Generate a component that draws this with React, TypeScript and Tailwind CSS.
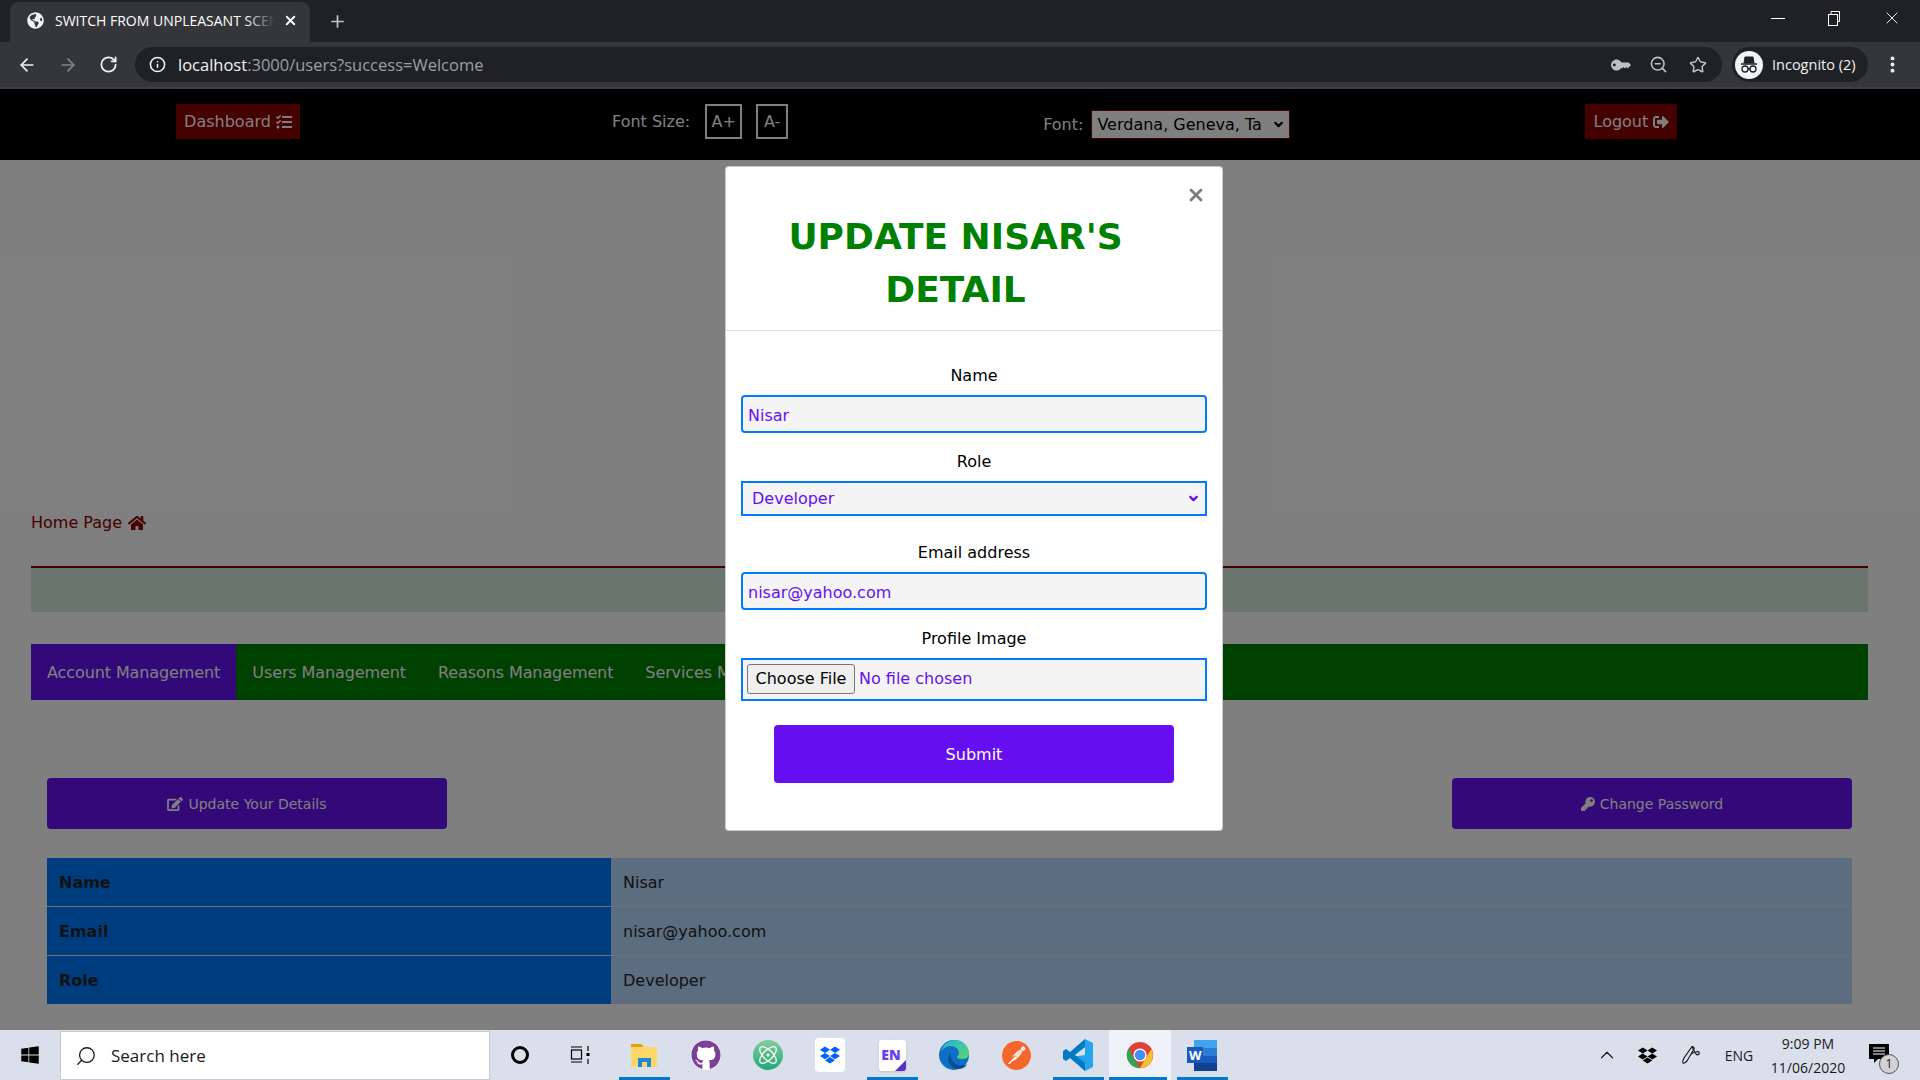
import { ArrowLeft, ArrowRight, Atom, ChevronDown, ChevronUp, EllipsisVertical, Info, Plus, RotateCw, Search, Star, X, ZoomOut } from "lucide-react";
import { FaEdit, FaGithub, FaGlobeAmericas, FaHome, FaKey, FaSignOutAlt, FaTasks, FaWindows } from "react-icons/fa";
import { SiDropbox, SiPostman } from "react-icons/si";

const pageFont = "font-['DejaVu_Sans',Verdana,sans-serif]";

const TopBar = () => (
  <div className="font-['Open_Sans',sans-serif] text-white">
    {/* Tabs */}
    <div className="h-[42px] bg-[#202124] flex items-end pl-[10px] relative">
      <div className="w-[300px] h-[40px] bg-[#35363a] rounded-t-lg flex items-center pl-[17px] pb-[4px] relative">
        <FaGlobeAmericas className="w-[17px] h-[17px] shrink-0 text-[#f1f3f4]" />
        <span className="ml-[11px] w-[220px] shrink-0 text-[14px] whitespace-nowrap overflow-hidden">
          SWITCH FROM UNPLEASANT SCENTS
        </span>
        <div className="absolute left-[235px] top-0 w-[30px] h-full bg-gradient-to-r from-transparent to-[#35363a]"></div>
        <X className="ml-[8px] w-[15px] h-[15px] shrink-0 text-white" strokeWidth={3} />
      </div>
      <Plus className="ml-[18px] mb-[11px] w-[19px] h-[19px] text-[#bdc1c6]" strokeWidth={2.2} />
      <div className="absolute right-0 top-0 flex items-center h-[36px]">
        <div className="w-[14px] h-px bg-white mr-[42px]"></div>
        <svg width="14" height="16" viewBox="0 0 14 16" fill="none" stroke="white" className="mr-[41px]">
          <rect x="1.5" y="4.5" width="9" height="11" />
          <path d="M4 4V1.5h8.5v10H11" />
        </svg>
        <X className="w-[20px] h-[20px] mr-[18px] text-white" strokeWidth={1.1} />
      </div>
    </div>
    {/* Toolbar */}
    <div className="h-[47px] bg-[#35363a] border-b-2 border-[#3f4043] flex items-start pt-[5px]">
      <div className="w-[135px] h-[35px] flex items-center pl-[17px] gap-[21px]">
        <ArrowLeft className="w-[20px] h-[20px] text-[#f1f3f4]" strokeWidth={2} />
        <ArrowRight className="w-[20px] h-[20px] text-[#80868b]" strokeWidth={2} />
        <RotateCw className="w-[19px] h-[19px] text-[#f1f3f4]" strokeWidth={2.2} />
      </div>
      <div className="w-[1587px] h-[35px] rounded-full bg-[#202124] flex items-center pl-[14px]">
        <Info className="w-[17px] h-[17px] text-[#f1f3f4]" strokeWidth={2.2} />
        <span className="ml-[12px] pt-px text-[16.5px] text-[#f1f3f4]">localhost</span>
        <span className="pt-px text-[16.5px] text-[#9aa0a6]">:3000/users?success=Welcome</span>
        <div className="ml-auto flex items-center gap-[21px] pr-[15px] text-[#bdc1c6]">
          <FaKey className="w-[16px] h-[16px] -scale-x-100 -rotate-45" />
          <ZoomOut className="w-[19px] h-[19px]" strokeWidth={2} />
          <Star className="w-[18px] h-[18px]" strokeWidth={2} />
        </div>
      </div>
      <div className="ml-[10px] w-[136px] h-[35px] rounded-full bg-[#202124] flex items-center pl-[3px]">
        <div className="w-[28px] h-[28px] rounded-full bg-[#f1f3f4] flex items-center justify-center">
          <svg width="20" height="20" viewBox="0 0 20 20" fill="none" stroke="#202124">
            <path d="M6 2h8l1 6H5z" fill="#202124" />
            <path d="M2 9h16" strokeWidth="1.5" />
            <circle cx="6" cy="14" r="3" strokeWidth="1.3" />
            <circle cx="14" cy="14" r="3" strokeWidth="1.3" />
            <path d="M9 14h2" strokeWidth="1.3" />
          </svg>
        </div>
        <span className="ml-[9px] text-[14.5px] text-[#f1f3f4]">Incognito (2)</span>
      </div>
      <EllipsisVertical className="ml-[14px] mt-[7px] w-[21px] h-[21px] text-[#f1f3f4]" strokeWidth={2.5} />
    </div>
  </div>
);

const PageNav = () => (
  <div className="h-[71px] bg-black flex items-start pl-[176px] pt-[15px] text-white text-[16px]">
    <a className="w-[124px] h-[35px] pt-px bg-[#8b0000] flex items-center justify-center gap-[5px]">
      Dashboard <FaTasks className="w-[16px] h-[16px]" />
    </a>
    <span className="ml-[312px] h-[35px] leading-[35px]">Font Size:</span>
    <button className="ml-[15px] w-[37px] h-[35px] border-2 border-white">A+</button>
    <button className="ml-[14px] w-[32px] h-[35px] border-2 border-white">A-</button>
    <span className="ml-[255px] mt-[6px] h-[29px] leading-[30px]">Font:</span>
    <div className="relative ml-[8px] mt-[6px]">
      <select
        defaultValue="Verdana, Geneva, Tahoma, sans-serif"
        className="block appearance-none w-[199px] h-[29px] pl-[5px] pr-[27px] bg-white text-black border border-[#8b0000] text-[16px]"
      >
        <option>Verdana, Geneva, Tahoma, sans-serif</option>
      </select>
      <ChevronDown className="absolute right-[5px] top-[8px] w-[13px] h-[13px] text-black pointer-events-none" strokeWidth={4} />
    </div>
    <a className="ml-[295px] w-[92px] h-[35px] pt-px bg-[#8b0000] flex items-center justify-center gap-[5px]">
      Logout <FaSignOutAlt className="w-[16px] h-[16px]" />
    </a>
  </div>
);

const rows = [
  { label: "Name", value: "Nisar" },
  { label: "Email", value: "nisar@yahoo.com" },
  { label: "Role", value: "Developer" },
];

const tabs = ["Users Management", "Reasons Management", "Services Management"];

const PageBody = () => (
  <div className="pl-[31px] pr-[52px] pt-[351px] text-[16px] text-[#212529]">
    <a className="h-[24px] flex items-center gap-[6px] text-[#8b0000]">
      Home Page <FaHome className="w-[18px] h-[16px]" />
    </a>
    <div className="mt-[31px] h-[2px] bg-[#8b0000]"></div>
    <div className="h-[44px] bg-[#d4edda]"></div>

    <div className="mt-[32px] h-[56px] bg-[#008000] flex items-center text-white tracking-[-0.1px]">
      <div className="h-full px-[16px] pt-[2px] bg-[#6610f2] flex items-center">Account Management</div>
      {tabs.map((t) => (
        <div key={t} className="h-full px-[16px] pt-[2px] flex items-center">
          {t}
        </div>
      ))}
    </div>

    <div className="px-[16px]">
      <div className="mt-[78px] flex justify-between text-[14px] text-white">
        <button className="w-[400px] h-[51px] pt-px bg-[#6610f2] rounded flex items-center justify-center gap-[5px]">
          <FaEdit className="w-[16px] h-[14px]" /> Update Your Details
        </button>
        <button className="w-[400px] h-[51px] pt-px bg-[#6610f2] rounded flex items-center justify-center gap-[5px]">
          <FaKey className="w-[14px] h-[14px]" /> Change Password
        </button>
      </div>

      <table className="mt-[29px] w-full border-collapse">
        <tbody>
          {rows.map((r) => (
            <tr key={r.label} className="h-[48.67px] border-t first:border-t-0 border-[#dee2e6]">
              <th className="w-[564px] bg-[#007bff] px-[12px] pt-[2px] text-left font-bold">{r.label}</th>
              <td className="bg-[#b8daff] px-[12px] pt-[2px]">{r.value}</td>
            </tr>
          ))}
        </tbody>
      </table>
    </div>
  </div>
);

const inputCls =
  "w-full h-[38px] pl-[5px] pr-[6px] pt-[2px] bg-[#f4f4f4] border-2 border-[#007bff] rounded text-[#6610f2] text-[16px] outline-none";
const labelCls = "h-[24px] leading-[26px] text-center mb-[8px] text-black";

const UpdateModal = () => (
  <div className="absolute left-[725px] top-[77px] w-[498px] bg-white rounded border border-[#00000033] text-[16px] text-[#212529]">
    <div className="h-[164px] border-b border-[#dee2e6] flex items-start pl-[15px] pt-[44px] relative">
      <h2 className="w-[429px] text-center text-[36px] leading-[52.8px] font-bold text-[#008000]">
        UPDATE NISAR'S DETAIL
      </h2>
      <button className="absolute right-[16px] top-[18px] text-[#7f7f7f]">
        <X className="w-[20px] h-[20px]" strokeWidth={3.4} />
      </button>
    </div>
    <form className="px-[15px] pt-[32px] pb-[47px] flex flex-col">
      <label className={labelCls}>Name</label>
      <input readOnly defaultValue="Nisar" className={inputCls} />
      <label className={`mt-[16px] ${labelCls}`}>Role</label>
      <div className="relative">
        <select
          defaultValue="Developer"
          className="block appearance-none w-full h-[35px] pl-[9px] pr-[24px] pt-[1px] bg-[#f4f4f4] border-2 border-[#007bff] text-[#6610f2] text-[16px] outline-none"
        >
          <option>Developer</option>
        </select>
        <ChevronDown className="absolute right-[7px] top-[11px] w-[13px] h-[13px] text-[#6610f2] pointer-events-none" strokeWidth={4} />
      </div>
      <label className={`mt-[24px] ${labelCls}`}>Email address</label>
      <input readOnly defaultValue="nisar@yahoo.com" className={inputCls} />
      <label className={`mt-[16px] ${labelCls}`}>Profile Image</label>
      <input
        type="file"
        className="w-full h-[43px] p-[4px] bg-[#f4f4f4] border-2 border-[#007bff] text-[#6610f2] text-[16px] outline-none file:h-[30px] file:w-[108px] file:mr-[4px] file:bg-[#efefef] file:border file:border-[#767676] file:rounded-[3px] file:text-black"
      />
      <button
        type="button"
        className="mt-[24px] mx-auto w-[400px] h-[58px] pt-px rounded bg-[#6610f2] text-white"
      >
        Submit
      </button>
    </form>
  </div>
);

const FolderIcon = () => (
  <svg width="30" height="30" viewBox="0 0 30 30">
    <path d="M2 4h10l3 3H2z" fill="#e3a008" />
    <rect x="2" y="7" width="26" height="20" fill="#fdd868" />
    <path d="M9 27V18h13v9h-4v-5h-5v5z" fill="#1e88d8" />
  </svg>
);

const EdgeIcon = () => (
  <svg width="32" height="32" viewBox="0 0 32 32">
    <defs>
      <linearGradient id="edgeTop" x1="0" y1="0" x2="1" y2="1">
        <stop offset="0" stopColor="#1fb6d8" />
        <stop offset="1" stopColor="#5ed56e" />
      </linearGradient>
    </defs>
    <circle cx="16" cy="16" r="15" fill="#0e6fc6" />
    <path d="M3 13C5 4 12 1 17 1c8 0 14 6 14 14 0 3-3 5-7 5-3 0-5-1-5-2 0-1 2-1 2-4 0-4-4-7-8-7-4 0-8 2-10 6z" fill="url(#edgeTop)" />
    <path d="M13 14c-3 2-4 8 0 13 3 3 8 4 12 2 2-1 3-2 4-4-3 2-8 2-11 0-4-2-6-7-5-11z" fill="#0b4a8f" />
  </svg>
);

const VscodeIcon = () => (
  <svg width="30" height="34" viewBox="0 0 30 34">
    <path d="M22 1 L30 5 V29 L22 33 L8 19 L22 17 Z" fill="#23a5f0" />
    <path d="M22 1 L22 33 L7 20 L3 23 L0 21 V13 L3 11 L7 14 Z M22 9 L12 17 L22 25 Z" fill="#0078c4" fillRule="evenodd" />
  </svg>
);

const ChromeIcon = () => (
  <svg width="28" height="32" viewBox="0 0 32 32">
    <circle cx="16" cy="16" r="15" fill="#db4437" />
    <path d="M3 8.5 L10 22 L16 31 A15 15 0 0 1 3 8.5z" fill="#2aa952" />
    <path d="M16 31 L22 20 L29 9 A15 15 0 0 1 16 31z" fill="#fbc02d" />
    <circle cx="16" cy="16" r="7.5" fill="white" />
    <circle cx="16" cy="16" r="6" fill="#4a8af4" />
  </svg>
);

const WordIcon = () => (
  <div className="relative w-[30px] h-[32px]">
    <svg width="30" height="32" viewBox="0 0 30 32" className="absolute left-0 top-0">
      <rect x="7" y="1" width="23" height="8" fill="#41a5ee" />
      <rect x="7" y="9" width="23" height="8" fill="#2b7cd3" />
      <rect x="7" y="17" width="23" height="7" fill="#185abd" />
      <rect x="7" y="24" width="23" height="8" fill="#103f91" />
      <rect x="0" y="8" width="16" height="16" fill="#185abd" />
    </svg>
    <span className="absolute left-[2px] top-[7px] text-[13px] font-bold text-white font-['Open_Sans',sans-serif]">W</span>
  </div>
);

const apps = [
  { id: "files", on: true, icon: <FolderIcon /> },
  {
    id: "github",
    icon: (
      <div className="w-[30px] h-[30px] rounded-full bg-white">
        <FaGithub className="w-[30px] h-[30px] text-[#7b3f98]" />
      </div>
    ),
  },
  {
    id: "atom",
    icon: (
      <div className="w-[30px] h-[30px] rounded-full bg-gradient-to-b from-[#7fcf9e] to-[#17a673] flex items-center justify-center">
        <Atom className="w-[22px] h-[22px] text-white" strokeWidth={1.4} />
      </div>
    ),
  },
  {
    id: "dropbox",
    icon: (
      <div className="w-[30px] h-[34px] rounded-sm bg-white flex items-center justify-center">
        <SiDropbox className="w-[20px] h-[20px] text-[#0061ff]" />
      </div>
    ),
  },
  {
    id: "en",
    on: true,
    icon: (
      <div className="relative w-[27px] h-[31px] rounded-[3px] bg-white flex items-center justify-center overflow-hidden font-['Open_Sans',sans-serif] shadow-sm">
        <span className="text-[14px] font-extrabold text-[#6a3ff2] -mt-[2px] -ml-[2px]">EN</span>
        <div className="absolute right-0 bottom-0 w-0 h-0 border-l-[11px] border-l-transparent border-b-[11px] border-b-[#5b2fc2]"></div>
      </div>
    ),
  },
  { id: "edge", icon: <EdgeIcon /> },
  {
    id: "postman",
    icon: (
      <div className="w-[29px] h-[29px] rounded-full bg-white">
        <SiPostman className="w-[29px] h-[29px] text-[#f4672c]" />
      </div>
    ),
  },
  { id: "vscode", on: true, icon: <VscodeIcon /> },
  { id: "chrome", on: true, active: true, icon: <ChromeIcon /> },
  { id: "word", on: true, icon: <WordIcon /> },
];

const Taskbar = () => (
  <div className="h-[50px] bg-[#d9e0ec] flex items-stretch font-['Open_Sans',sans-serif] text-[#1a1a1a]">
    <div className="w-[60px] flex items-center justify-center">
      <FaWindows className="w-[20px] h-[20px] text-black" />
    </div>
    <div className="w-[430px] mt-px bg-white border border-[#c8ccd2] flex items-center pl-[14px]">
      <Search className="w-[22px] h-[22px] -scale-x-100" strokeWidth={1.4} />
      <span className="ml-[14px] text-[17px]">Search here</span>
    </div>
    <div className="w-[59px] flex items-center justify-center">
      <svg width="20" height="20" viewBox="0 0 20 20" fill="none" stroke="black" strokeWidth="3">
        <circle cx="10" cy="10" r="7.5" />
      </svg>
    </div>
    <div className="w-[62px] flex items-center justify-center">
      <svg width="20" height="20" viewBox="0 0 20 20" fill="none" stroke="black" strokeWidth="1.2">
        <rect x="1.5" y="5" width="10" height="9" />
        <path d="M1 2h11M1 17h11M1 19h0M18 1v5M18 14v5" />
        <rect x="16.5" y="8" width="3" height="3" fill="black" stroke="none" />
      </svg>
    </div>
    <div className="ml-[2px] flex items-stretch">
      {apps.map((a) => (
        <div
          key={a.id}
          className={
            a.active
              ? "relative w-[62px] bg-[#eef1f8] flex items-center justify-center"
              : "relative w-[62px] flex items-center justify-center"
          }
        >
          {a.icon}
          {a.on ? (
            <div
              className={
                a.active
                  ? "absolute left-0 right-[4px] bottom-0 h-[3px] bg-[#0078d4]"
                  : "absolute left-[6px] right-[5px] bottom-0 h-[3px] bg-[#0078d4]"
              }
            ></div>
          ) : null}
        </div>
      ))}
    </div>
    <div className="ml-auto flex items-stretch pr-[17px] text-[14px]">
      <div className="w-[40px] flex items-center justify-center">
        <ChevronUp className="w-[22px] h-[22px]" strokeWidth={1.3} />
      </div>
      <div className="w-[40px] flex items-center justify-center">
        <SiDropbox className="w-[19px] h-[19px] text-black" />
      </div>
      <div className="w-[50px] flex items-center justify-center">
        <svg width="22" height="22" viewBox="0 0 22 22" fill="none" stroke="#1a1a1a" strokeWidth="1.2">
          <path d="M2 19c-1-2 0-3 1-5l7-10c1-2 4-1 3 1L6 17c-1 1-3 3-4 2z" />
          <path d="M11 2c1 4 3 6 4 8 1 1 2 1 3 0 1-2-1-3-3-2-2 0-3 1-5 2" />
        </svg>
      </div>
      <div className="w-[44px] flex items-center justify-center">ENG</div>
      <div className="w-[94px] pt-px flex flex-col items-center justify-center leading-[24px]">
        <span>9:09 PM</span>
        <span>11/06/2020</span>
      </div>
      <div className="relative w-[48px] flex items-center justify-center">
        <svg width="22" height="22" viewBox="0 0 22 22" className="-mt-[2px] ml-[2px]">
          <path d="M0 1h20v15H9l-4 4v-4H0z" fill="black" />
          <path d="M4 5h12M4 8h12M4 11h12" stroke="white" strokeWidth="1" />
        </svg>
        <div className="absolute left-[24px] top-[24px] w-[20px] h-[20px] rounded-full bg-[#d0d2d6] border border-[#555] text-[12px] leading-[18px] text-center">
          1
        </div>
      </div>
    </div>
  </div>
);

export default function App() {
  return (
    <div className="w-[1920px] h-[1080px] overflow-hidden flex flex-col bg-white">
      <TopBar />
      <div className={`relative h-[941px] overflow-hidden bg-white ${pageFont}`}>
        <PageNav />
        <PageBody />
        <div className="absolute inset-0 bg-black/50"></div>
        <UpdateModal />
      </div>
      <Taskbar />
    </div>
  );
}
